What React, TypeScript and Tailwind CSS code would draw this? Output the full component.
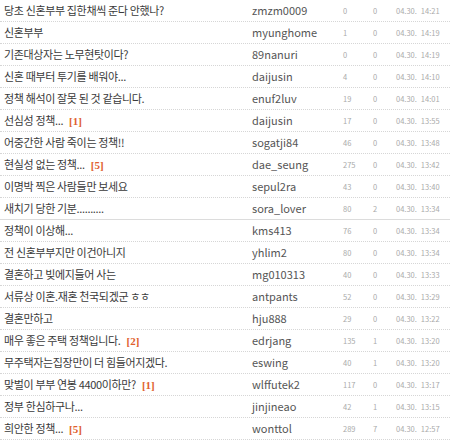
import React from "react";

type Row = { t: string; c?: number; a: string; v: number; r: number; d: string; tm: string; solid?: boolean };

const rows: Row[] = [
  { t: "당초 신혼부부 집한채씩 준다 안했나?", a: "zmzm0009", v: 0, r: 0, d: "04.30.", tm: "14:21" },
  { t: "신혼부부", a: "myunghome", v: 1, r: 0, d: "04.30.", tm: "14:19" },
  { t: "기존대상자는 노무현탓이다?", a: "89nanuri", v: 0, r: 0, d: "04.30.", tm: "14:19" },
  { t: "신혼 때부터 투기를 배워야...", a: "daijusin", v: 4, r: 0, d: "04.30.", tm: "14:10" },
  { t: "정책 해석이 잘못 된 것 같습니다.", a: "enuf2luv", v: 19, r: 0, d: "04.30.", tm: "14:01" },
  { t: "선심성 정책...", c: 1, a: "daijusin", v: 17, r: 0, d: "04.30.", tm: "13:55" },
  { t: "어중간한 사람 죽이는 정책!!", a: "sogatji84", v: 46, r: 0, d: "04.30.", tm: "13:48" },
  { t: "현실성 없는 정책...", c: 5, a: "dae_seung", v: 275, r: 0, d: "04.30.", tm: "13:42" },
  { t: "이명박 찍은 사람들만 보세요", a: "sepul2ra", v: 43, r: 0, d: "04.30.", tm: "13:40" },
  { t: "새치기 당한 기분..........", a: "sora_lover", v: 80, r: 2, d: "04.30.", tm: "13:34", solid: true },
  { t: "정책이 이상해...", a: "kms413", v: 76, r: 0, d: "04.30.", tm: "13:34" },
  { t: "전 신혼부부지만 이건아니지", a: "yhlim2", v: 80, r: 0, d: "04.30.", tm: "13:34" },
  { t: "결혼하고 빚에지들어 사는", a: "mg010313", v: 40, r: 0, d: "04.30.", tm: "13:33" },
  { t: "서류상 이혼.재혼 천국되겠군 ㅎㅎ", a: "antpants", v: 52, r: 0, d: "04.30.", tm: "13:29" },
  { t: "결혼만하고", a: "hju888", v: 29, r: 0, d: "04.30.", tm: "13:22" },
  { t: "매우 좋은 주택 정책입니다.", c: 2, a: "edrjang", v: 135, r: 1, d: "04.30.", tm: "13:20" },
  { t: "무주택자는집장만이 더 힘들어지겠다.", a: "eswing", v: 40, r: 1, d: "04.30.", tm: "13:20" },
  { t: "맞벌이 부부 연봉 4400이하만?", c: 1, a: "wlffutek2", v: 117, r: 0, d: "04.30.", tm: "13:17" },
  { t: "정부 한심하구나...", a: "jinjineao", v: 42, r: 1, d: "04.30.", tm: "13:15" },
  { t: "희안한 정책...", c: 5, a: "wonttol", v: 289, r: 7, d: "04.30.", tm: "12:57" },
];

export default function App() {
  return (
    <div
      className="w-[450px] h-[443px] bg-white overflow-hidden"
      style={{ fontFamily: '"Noto Sans CJK KR", "Noto Sans", sans-serif' }}
    >
      {rows.map((row, i) => (
        <div
          key={i}
          className={
            "grid grid-cols-[252px_91px_30px_20px_1fr] items-center h-[22px] border-b " +
            (row.solid ? "border-solid border-[#dcdcdc]" : "border-dotted border-[#d6d6d6]")
          }
        >
          <div className="pl-[4px] text-[11px] tracking-[-0.35px] text-[#3a3a3a] whitespace-nowrap leading-none">
            {row.t}
            {row.c !== undefined && (
              <span
                className="ml-[6px] font-bold text-[#e0602e] text-[11px] tracking-normal"
                style={{ fontFamily: '"Liberation Serif", serif' }}
              >
                [{row.c}]
              </span>
            )}
          </div>
          <div className="text-[11px] text-[#555] leading-none whitespace-nowrap">{row.a}</div>
          <div className="text-[7.5px] text-[#aaa] leading-none">{row.v}</div>
          <div className="text-[7.5px] text-[#aaa] leading-none">{row.r}</div>
          <div className="pl-[3px] text-[7.5px] text-[#aaa] leading-none whitespace-nowrap">
            {row.d}
            <span className="ml-[4px]">{row.tm}</span>
          </div>
        </div>
      ))}
    </div>
  );
}
